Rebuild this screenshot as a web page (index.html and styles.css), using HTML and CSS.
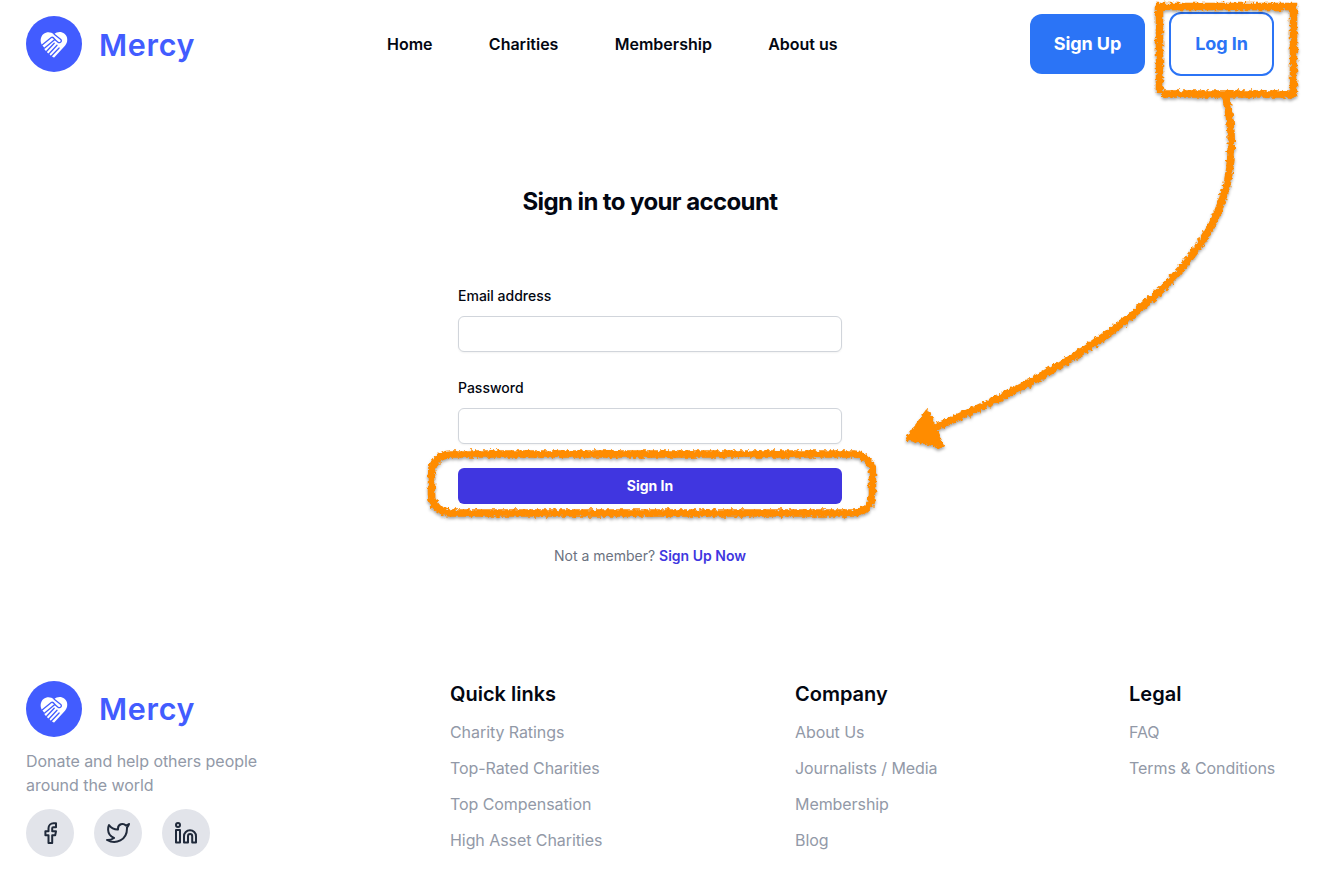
FILE: index.html
```html
<!DOCTYPE html>
<html lang="en">
<head>
<meta charset="utf-8">
<title>Mercy</title>
<link rel="stylesheet" href="styles.css">
</head>
<body>
<svg class="defs" width="0" height="0" aria-hidden="true">
  <symbol id="mark" viewBox="0 0 56 56">
    <circle cx="28" cy="28" r="28" fill="#425cff"/>
    <path d="M28.200 41.400Q27.200 41.800 25.500 39.700Q24.300 40 23.200 37.500Q21 37.500 20.800 35Q18.200 34.500 18.500 32L16.500 29.500C13.700 26.500 14.200 20.500 17.500 18C20.700 15.400 25 15.700 28 18.200C31 15.600 35.300 15.300 38.500 17.700C42.100 20.500 42.100 26.200 39 29.700Z" fill="#fff"/>
    <g fill="none" stroke="#425cff" stroke-width="1.300" stroke-linecap="round" stroke-linejoin="round">
      <path d="M28.200 18.200 34.800 23.400Q36.200 25.500 34.100 26.500Q33 27 31.700 25.900L28.800 23.400 18.700 32"/>
      <path d="M16.400 28.800 25.300 21.500Q26.800 20.600 28.800 23.400"/>
      <path d="M28.200 27.300 20.900 35M31 29.200 23.300 37.500M33.100 32 25.600 39.700"/>
    </g>
  </symbol>
</svg>
<header class="header">
  <a class="logo"><svg class="logo-mark"><use href="#mark"/></svg><span class="logo-name">Mercy</span></a>
  <nav class="nav"><a>Home</a><a>Charities</a><a>Membership</a><a>About us</a></nav>
  <div class="actions"><a class="button button-solid">Sign Up</a><a class="button button-outline">Log In</a></div>
</header>
<main class="sign-in">
  <h1 class="title">Sign in to your account</h1>
  <form class="form">
    <label class="label" for="email">Email address</label>
    <input class="input" id="email" type="email">
    <label class="label" for="password">Password</label>
    <input class="input" id="password" type="password">
    <button class="submit" type="button">Sign In</button>
  </form>
  <p class="member">Not a member? <a>Sign Up Now</a></p>
</main>
<footer class="footer">
  <section class="brand">
    <a class="logo"><svg class="logo-mark"><use href="#mark"/></svg><span class="logo-name">Mercy</span></a>
    <p class="tagline">Donate and help others people<br>around the world</p>
    <div class="social">
      <a><svg viewBox="0 0 24 24"><path d="M18 2.300H15.500A5 5 0 0 0 10.500 7.300V10.200H7.400V14.200H10.500V22H14.200V14.200H17.200L18 10.200H14.200V7.300A1 1 0 0 1 15.200 6.300H18Z"/></svg></a>
      <a><svg viewBox="0 0 24 24"><path d="M23 3a10.900 10.900 0 0 1-3.140 1.530 4.480 4.480 0 0 0-7.860 3v1A10.660 10.660 0 0 1 3 4s-4 9 5 13a11.640 11.640 0 0 1-7 2c9 5 20 0 20-11.500a4.500 4.500 0 0 0-.08-.83A7.720 7.720 0 0 0 23 3z"/></svg></a>
      <a><svg viewBox="0 0 24 24"><circle cx="4" cy="4" r="2"/><path d="M2 9H6V21.500H2ZM10 21.500V15.200A6 6 0 0 1 22 15.200V21.500H18.200V15.200A2.100 2.100 0 0 0 14 15.200V21.500Z"/></svg></a>
    </div>
  </section>
  <section class="links quick"><h2>Quick links</h2><a>Charity Ratings</a><a>Top-Rated Charities</a><a>Top Compensation</a><a>High Asset Charities</a></section>
  <section class="links company"><h2>Company</h2><a>About Us</a><a>Journalists / Media</a><a>Membership</a><a>Blog</a></section>
  <section class="links"><h2>Legal</h2><a>FAQ</a><a>Terms &amp; Conditions</a></section>
</footer>
<svg class="annotations" viewBox="0 0 1330 896" aria-hidden="true">
  <defs>
    <filter id="crayon" filterUnits="userSpaceOnUse" x="0" y="0" width="1330" height="896" color-interpolation-filters="sRGB">
      <feTurbulence type="fractalNoise" baseFrequency=".3" numOctaves="2" seed="4" result="noise"/>
      <feDisplacementMap in="SourceGraphic" in2="noise" scale="6" xChannelSelector="R" yChannelSelector="G" result="rough"/>
      <feDropShadow in="rough" dx="0" dy="2" stdDeviation="1.500" flood-color="#000" flood-opacity=".35"/>
    </filter>
  </defs>
  <g filter="url(#crayon)" fill="none" stroke="#ff8c00" stroke-width="7.500">
    <path d="M1159.500 93V6.500H1293.500V94H1162"/>
    <rect x="431.500" y="454" width="441" height="59" rx="19"/>
    <path d="M1226 97C1240 163 1230 222 1162 289C1104 344 1022 391 936 427"/>
    <path d="M927.500 411 908 438.500 942 446Z" fill="#ff8c00" stroke-width="4" stroke-linejoin="round"/>
  </g>
</svg>
</body>
</html>
```
FILE: styles.css
```css
* { box-sizing: border-box; }
body { margin: 0; width: 1330px; height: 896px; overflow: hidden; background: #fff; color: #030712; font-family: Inter, "Liberation Sans", sans-serif; font-size: 16px; line-height: 24px; }
.defs { display: block; }
.header { height: 88px; padding: 0 56px 0 26px; display: grid; grid-template-columns: 361px 1fr auto; align-items: center; }
.logo { display: flex; align-items: center; gap: 17px; height: 57px; color: #425cff; }
.logo-mark { width: 56px; height: 56px; flex: none; }
.logo-name { font-size: 30.500px; line-height: 40px; font-weight: 600; letter-spacing: .7px; padding-top: 2px; }
.footer .logo-name { padding-top: 0; }
.nav { display: flex; gap: 56.300px; font-weight: 600; white-space: nowrap; }
.actions { display: flex; align-items: center; gap: 24px; }
.button { display: flex; align-items: center; justify-content: center; border-radius: 12px; font-size: 18px; font-weight: 700; letter-spacing: -.1px; white-space: nowrap; }
.button-solid { width: 115px; height: 60px; background: #2b74f6; color: #fff; }
.button-outline { width: 105px; height: 64px; border: 2px solid #2b74f6; color: #2b74f6; }
.sign-in { width: 384px; margin: 98px 0 0 458px; }
.title { margin: 0 0 66px; font-size: 24px; line-height: 32px; font-weight: 700; letter-spacing: -.6px; text-align: center; white-space: nowrap; }
.form { display: flex; flex-direction: column; }
.label { margin-bottom: 8px; font-size: 14px; line-height: 24px; font-weight: 500; }
.input { width: 100%; height: 36px; margin: 0 0 24px; border: 1px solid #d1d5db; border-radius: 6px; background: #fff; box-shadow: 0 1px 2px rgba(0,0,0,.05); font: inherit; }
.submit { height: 36px; border: 0; border-radius: 6px; background: #4036e0; color: #fff; font: 700 14px/24px Inter, sans-serif; }
.member { margin: 40px 0 0; color: #6b7280; font-size: 14px; line-height: 24px; text-align: center; }
.member a { color: #4036e0; font-weight: 600; }
.footer { display: flex; margin-top: 112px; padding: 0 56px 0 26px; }
.brand { flex: none; width: 424px; }
.tagline { margin: 12px 0; color: #9299a7; letter-spacing: -.05px; }
.social { display: flex; gap: 20px; }
.social a { width: 48px; height: 48px; border-radius: 50%; background: #e2e4ea; display: grid; place-items: center; }
.social svg { width: 24px; height: 24px; fill: none; stroke: #202a3b; stroke-width: 2; stroke-linecap: round; stroke-linejoin: round; }
.links { display: flex; flex: none; flex-direction: column; gap: 12px; color: #9299a7; letter-spacing: -.07px; white-space: nowrap; }
.links h2 { margin: 0; color: #030712; font-size: 20px; line-height: 28px; font-weight: 600; letter-spacing: 0; }
.quick { width: 345px; }
.company { width: 334px; }
.annotations { position: absolute; inset: 0; width: 1330px; height: 896px; pointer-events: none; }
```
